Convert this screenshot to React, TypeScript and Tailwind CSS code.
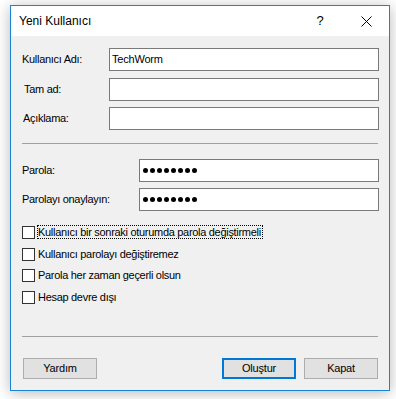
import React from 'react';

const font = { fontFamily: '"Liberation Sans", Arial, sans-serif' };

const TextRow = ({ label, labelW, value, password }: { label: string; labelW: string; value?: string; password?: boolean }) => (
  <div className="flex items-center h-[23px]">
    <div className={`${labelW} text-[11px] tracking-[-0.3px] text-black`}>{label}</div>
    <div className="flex-1 h-[23px] bg-white border border-[#7a7a7a] flex items-center pl-[2px]">
      {password ? (
        <div className="flex gap-[2px] pl-[1px]">
          {Array.from({ length: 8 }).map((_, i) => (
            <span key={i} className="w-[5px] h-[5px] rounded-full bg-black" />
          ))}
        </div>
      ) : (
        <span className="text-[11px] tracking-[-0.2px] text-black leading-none">{value}</span>
      )}
    </div>
  </div>
);

const Check = ({ label, focused }: { label: string; focused?: boolean }) => (
  <div className="flex items-center h-[14px]">
    <span className="w-[13px] h-[13px] border border-[#333333] bg-white shrink-0" />
    <span
      className={`ml-[2px] h-[14px] flex items-center text-[11px] tracking-[-0.3px] text-black leading-none pr-[1px] ${
        focused ? 'border border-dotted border-black' : 'border border-transparent'
      }`}
    >
      {label}
    </span>
  </div>
);

const Btn = ({ children, primary }: { children: React.ReactNode; primary?: boolean }) => (
  <button
    className={`w-[74px] h-[21px] bg-[#e1e1e1] text-[11px] tracking-[-0.2px] text-black flex items-center justify-center ${
      primary ? 'border-2 border-[#0078d7]' : 'border border-[#adadad]'
    }`}
  >
    {children}
  </button>
);

export default function App() {
  return (
    <div className="w-[396px] h-[399px] bg-white pt-[5px] pl-[10px]" style={font}>
      <div className="w-[380px] h-[386px] border border-[#1883d7] bg-[#f0f0f0] flex flex-col shadow-[0_2px_14px_rgba(0,0,0,0.28)]">
        {/* title bar */}
        <div className="h-[30px] bg-white flex items-center">
          <span className="pl-[8px] text-[12px] text-black flex-1">Yeni Kullanıcı</span>
          <div className="w-[46px] h-[30px] flex items-center justify-center text-[13px] text-black">?</div>
          <div className="w-[46px] h-[30px] flex items-center justify-center">
            <svg width="11" height="11" viewBox="0 0 11 11">
              <path d="M0.5 0.5 L10.5 10.5 M10.5 0.5 L0.5 10.5" stroke="#000" strokeWidth="1" />
            </svg>
          </div>
        </div>

        {/* content */}
        <div className="flex flex-col pl-[11px] pr-[10px] pt-[12px]">
          <TextRow label="Kullanıcı Adı:" labelW="w-[87px]" value="TechWorm" />
          <div className="mt-[7px]">
            <TextRow label="Tam ad:" labelW="w-[87px] pl-[2px]" />
          </div>
          <div className="mt-[6px]">
            <TextRow label="Açıklama:" labelW="w-[87px] pl-[1px]" />
          </div>

          <div className="mt-[13px] mr-[1px] border-t border-[#a0a0a0]" />

          <div className="mt-[15px]">
            <TextRow label="Parola:" labelW="w-[117px]" password />
          </div>
          <div className="mt-[6px]">
            <TextRow label="Parolayı onaylayın:" labelW="w-[117px]" password />
          </div>

          <div className="mt-[14px] flex flex-col">
            <Check label="Kullanıcı bir sonraki oturumda parola değiştirmeli" focused />
            <div className="mt-[8px]">
              <Check label="Kullanıcı parolayı değiştiremez" />
            </div>
            <div className="mt-[7px]">
              <Check label="Parola her zaman geçerli olsun" />
            </div>
            <div className="mt-[8px]">
              <Check label="Hesap devre dışı" />
            </div>
          </div>

          <div className="mt-[32px] mr-[1px] border-t border-[#a0a0a0]" />

          <div className="mt-[21px] flex items-center pl-[1px] pr-[1px]">
            <Btn>Yardım</Btn>
            <div className="flex-1" />
            <Btn primary>Oluştur</Btn>
            <div className="ml-[8px]">
              <Btn>Kapat</Btn>
            </div>
          </div>
        </div>
      </div>
    </div>
  );
}
